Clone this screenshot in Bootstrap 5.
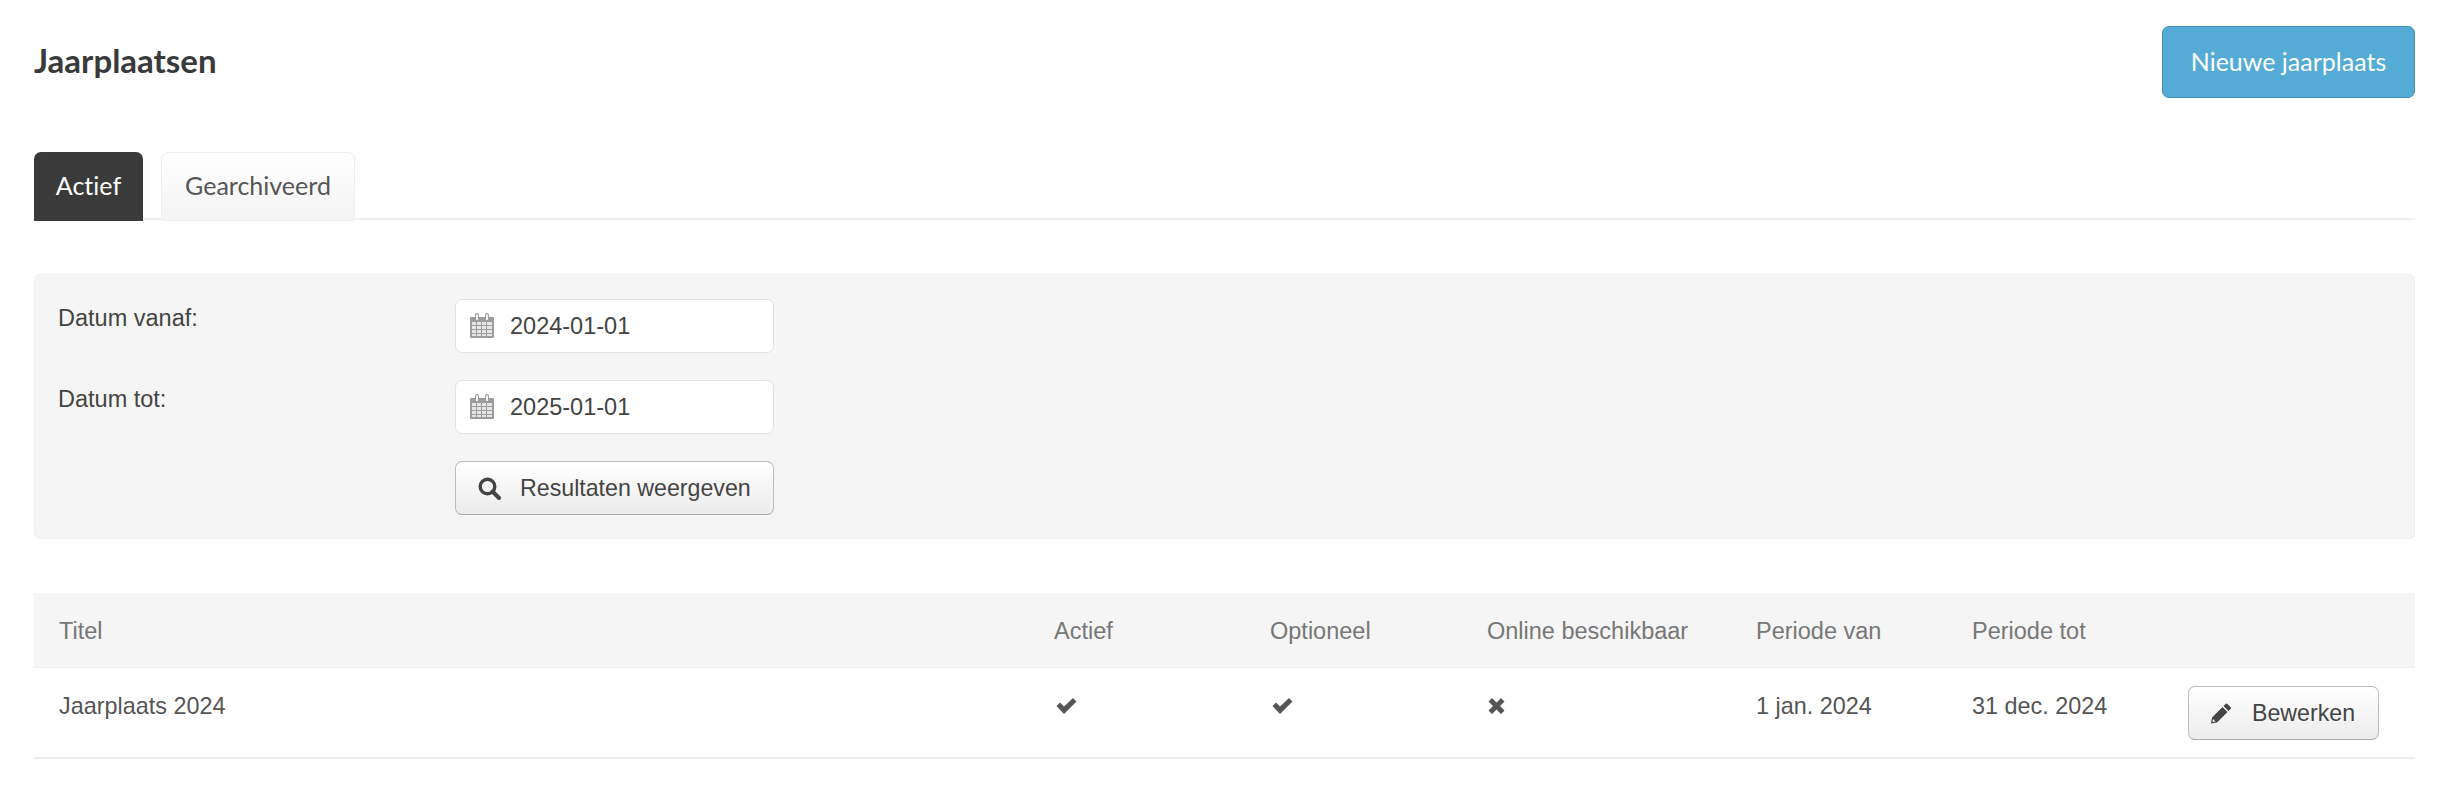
<!DOCTYPE html>
<html lang="nl">
<head>
<meta charset="utf-8">
<title>Jaarplaatsen</title>
<link href="https://cdn.jsdelivr.net/npm/bootstrap@5.3.0/dist/css/bootstrap.min.css" rel="stylesheet">
<style>
body{background:#fff;color:#444;font-family:"Liberation Sans",Arial,sans-serif;font-size:23.5px}
.pagewrap{padding:26px 35px 0 34px}
.pagetitle{font-family:Lato,sans-serif;font-weight:700;font-size:33px;color:#3a3a3a;margin:0 0 3px}
.btn-new{background:#54acd6;border:1px solid #3f8fb2;border-radius:7px;color:#fff;font-family:Lato,sans-serif;font-size:25px;font-variant-ligatures:none;width:253px;height:72px;padding:0}
.tabbar{margin-top:54px;border-bottom:2px solid #f1f1f1;height:68px;gap:18px}
.tabbar .nav-link{font-family:Lato,sans-serif;font-size:25px;font-variant-ligatures:none;line-height:1;height:69px;display:flex;align-items:center;justify-content:center;border-radius:7px 7px 0 0;padding:0 0 3px}
.tabbar .nav-item{margin-bottom:-1px}
.tabbar .nav-link.active{background:#3a3a3a;color:#fff;border:0;width:109px}
.tabbar .nav-link.plain{background:linear-gradient(#fff,#f3f3f3);color:#555;border:1px solid #eee;width:194px}
.filterpanel{margin-top:54px;background:#f5f5f5;border:1px solid #eee;border-radius:6px;padding:24px 0 24px 23px;height:265px}
.filterrow{display:flex;margin-bottom:27px}
.filterrow:last-child{margin-bottom:0}
.filterlabel{width:397px;margin:0;padding-top:4px;line-height:30px;color:#444}
.fieldbox{position:relative;width:319px}
.fieldbox .form-control{height:54px;border:1px solid #e2e2e2;border-radius:7px;font-size:23.5px;color:#444;padding:0 0 0 54px;background:#fff}
.calicon{position:absolute;left:15px;top:14px;width:24px;height:26px}
.btn-soft{background:linear-gradient(#fff,#ececec);border:1px solid #bdbdbd;border-bottom-color:#aaa;border-radius:7px;color:#444;font-size:23.2px;height:54px;display:flex;align-items:center;padding:0}
.btn-search{width:319px;padding-left:22px;gap:19px}
.btn-edit{width:191px;padding-left:22px;gap:21px}
.resulttable{margin-top:54px;table-layout:fixed;width:100%;margin-bottom:0;--bs-table-color:#444}
.resulttable th{background:#f5f5f5;color:#777;font-weight:400;font-size:23.5px;height:74px;padding:4px 0 0 25px;vertical-align:middle;border-bottom:1px solid #eee}
.resulttable td{height:91px;padding:0 0 12px 25px;vertical-align:middle;border-bottom:2px solid #eee;font-size:23.4px;color:#555}
.resulttable td.actioncell{padding:2px 0 0 25px}
.w-title{width:995px}.w-a{width:216px}.w-o{width:217px}.w-on{width:269px}.w-act{width:252px}
.tick{width:21px;height:16px;display:block;margin-left:2px}
.cross{width:17px;height:16px;display:block;margin-left:1px}
</style>
</head>
<body>
<div class="pagewrap">
  <div class="d-flex justify-content-between align-items-center">
    <h1 class="pagetitle">Jaarplaatsen</h1>
    <button type="button" class="btn btn-new">Nieuwe jaarplaats</button>
  </div>

  <ul class="nav nav-tabs tabbar">
    <li class="nav-item"><a class="nav-link active" href="#">Actief</a></li>
    <li class="nav-item"><a class="nav-link plain" href="#">Gearchiveerd</a></li>
  </ul>

  <form class="filterpanel">
    <div class="filterrow">
      <label class="filterlabel" for="d1">Datum vanaf:</label>
      <div class="fieldbox">
        <svg class="calicon" viewBox="0 0 24 26"><path fill="#9c9c9c" d="M1 4h4V2a2 2 0 0 1 4 0v2h6V2a2 2 0 0 1 4 0v2h4a1 1 0 0 1 1 1v19a1 1 0 0 1-1 1H1a1 1 0 0 1-1-1V5a1 1 0 0 1 1-1z"/><path fill="#f4f4f4" d="M6 1.500h2V7H6zM16 1.500h2V7h-2z"/><path fill="#fff" d="M2 9h4v3H2zM7 9h4v3H7zM12 9h4v3h-4zM17 9h5v3h-5zM2 13h4v3H2zM7 13h4v3H7zM12 13h4v3h-4zM17 13h5v3h-5zM2 17h4v3H2zM7 17h4v3H7zM12 17h4v3h-4zM17 17h5v3h-5zM2 21h4v2H2zM7 21h4v2H7zM12 21h4v2h-4zM17 21h5v2h-5z" opacity=".75"/></svg>
        <input id="d1" class="form-control" type="text" value="2024-01-01">
      </div>
    </div>
    <div class="filterrow">
      <label class="filterlabel" for="d2">Datum tot:</label>
      <div class="fieldbox">
        <svg class="calicon" viewBox="0 0 24 26"><path fill="#9c9c9c" d="M1 4h4V2a2 2 0 0 1 4 0v2h6V2a2 2 0 0 1 4 0v2h4a1 1 0 0 1 1 1v19a1 1 0 0 1-1 1H1a1 1 0 0 1-1-1V5a1 1 0 0 1 1-1z"/><path fill="#f4f4f4" d="M6 1.500h2V7H6zM16 1.500h2V7h-2z"/><path fill="#fff" d="M2 9h4v3H2zM7 9h4v3H7zM12 9h4v3h-4zM17 9h5v3h-5zM2 13h4v3H2zM7 13h4v3H7zM12 13h4v3h-4zM17 13h5v3h-5zM2 17h4v3H2zM7 17h4v3H7zM12 17h4v3h-4zM17 17h5v3h-5zM2 21h4v2H2zM7 21h4v2H7zM12 21h4v2h-4zM17 21h5v2h-5z" opacity=".75"/></svg>
        <input id="d2" class="form-control" type="text" value="2025-01-01">
      </div>
    </div>
    <div class="filterrow">
      <span class="filterlabel"></span>
      <button type="button" class="btn btn-soft btn-search">
        <svg width="23" height="23" viewBox="0 0 23 23"><circle cx="9.500" cy="9.500" r="7.300" fill="none" stroke="#444" stroke-width="3.400"/><path d="M14.500 14.500l6.500 6.500" stroke="#444" stroke-width="4" stroke-linecap="round"/></svg>
        <span>Resultaten weergeven</span>
      </button>
    </div>
  </form>

  <table class="table resulttable">
    <thead>
      <tr>
        <th class="w-title">Titel</th>
        <th class="w-a">Actief</th>
        <th class="w-o">Optioneel</th>
        <th class="w-on">Online beschikbaar</th>
        <th class="w-a">Periode van</th>
        <th class="w-a">Periode tot</th>
        <th class="w-act"></th>
      </tr>
    </thead>
    <tbody>
      <tr>
        <td>Jaarplaats 2024</td>
        <td><svg class="tick" viewBox="0 0 20 16"><path fill="#555" d="M0 8l3.500-3.500 4 4L16.500 0 20 3.500 7.500 16z"/></svg></td>
        <td><svg class="tick" viewBox="0 0 20 16"><path fill="#555" d="M0 8l3.500-3.500 4 4L16.500 0 20 3.500 7.500 16z"/></svg></td>
        <td><svg class="cross" viewBox="0 0 16 16"><path fill="#555" d="M3.500 0L8 4.500 12.500 0 16 3.500 11.500 8l4.500 4.500-3.500 3.500L8 11.500 3.500 16 0 12.500 4.500 8 0 3.500z"/></svg></td>
        <td>1 jan. 2024</td>
        <td>31 dec. 2024</td>
        <td class="actioncell">
          <button type="button" class="btn btn-soft btn-edit">
            <svg width="20" height="21" viewBox="0 0 20 20"><path fill="#444" d="M14.500 0.500a1.500 1.500 0 0 1 2 0l3 3a1.500 1.500 0 0 1 0 2L17.500 7.500 12.500 2.500zM11.500 3.500l5 5L6 19 0 20l1-6z"/><path fill="#fff" d="M2 15.500l2.500 2.500-3 .5z"/></svg>
            <span>Bewerken</span>
          </button>
        </td>
      </tr>
    </tbody>
  </table>
</div>
<script src="https://cdn.jsdelivr.net/npm/bootstrap@5.3.0/dist/js/bootstrap.bundle.min.js"></script>
</body>
</html>
